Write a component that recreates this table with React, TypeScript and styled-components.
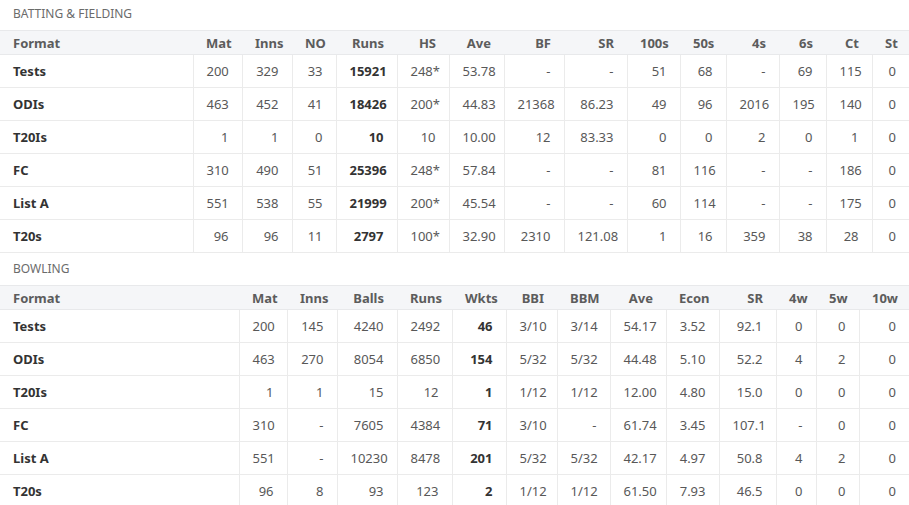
import React from "react";
import styled, { createGlobalStyle } from "styled-components";

const Global = createGlobalStyle`
  html, body { margin: 0; padding: 0; background: #fff; }
  body { font-family: "Noto Sans", "Open Sans", Arial, sans-serif; overflow: hidden; }
`;

const Page = styled.div`
  width: 909px;
  display: flex;
  flex-direction: column;
`;

const Section = styled.section<{ $gap: number }>`
  margin-top: ${(p) => p.$gap}px;
`;

const Title = styled.div`
  padding: 6px 13px 8px;
  font-size: 12px;
  line-height: 16px;
  color: #6b6b6b;
  text-transform: uppercase;
`;

const Table = styled.table`
  width: 909px;
  border-collapse: collapse;
  table-layout: fixed;
  font-size: 13px;
`;

const Th = styled.th<{ $left?: boolean }>`
  height: 23px;
  padding: 0 13px;
  background: #f5f6f8;
  border-top: 1px solid #e8e9eb;
  border-bottom: 1px solid #e8e9eb;
  color: #5c5c5c;
  font-weight: 700;
  text-align: ${(p) => (p.$left ? "left" : "right")};
  white-space: nowrap;
`;

const Td = styled.td<{ $left?: boolean; $bold?: boolean }>`
  height: 32px;
  padding: 0 13px;
  border-bottom: 1px solid #ebebeb;
  border-left: ${(p) => (p.$left ? "none" : "1px solid #ebebeb")};
  color: ${(p) => (p.$bold ? "#333" : "#585858")};
  font-weight: ${(p) => (p.$bold ? 700 : 400)};
  text-align: ${(p) => (p.$left ? "left" : "right")};
  white-space: nowrap;
`;

type Spec = { cols: string[]; widths: number[]; boldCol: number; rows: string[][] };

const batting: Spec = {
  cols: ["Format", "Mat", "Inns", "NO", "Runs", "HS", "Ave", "BF", "SR", "100s", "50s", "4s", "6s", "Ct", "St"],
  widths: [193, 49, 50, 44, 61, 52, 55, 60, 63, 53, 46, 53, 47, 46, 37],
  boldCol: 4,
  rows: [
    ["Tests", "200", "329", "33", "15921", "248*", "53.78", "-", "-", "51", "68", "-", "69", "115", "0"],
    ["ODIs", "463", "452", "41", "18426", "200*", "44.83", "21368", "86.23", "49", "96", "2016", "195", "140", "0"],
    ["T20Is", "1", "1", "0", "10", "10", "10.00", "12", "83.33", "0", "0", "2", "0", "1", "0"],
    ["FC", "310", "490", "51", "25396", "248*", "57.84", "-", "-", "81", "116", "-", "-", "186", "0"],
    ["List A", "551", "538", "55", "21999", "200*", "45.54", "-", "-", "60", "114", "-", "-", "175", "0"],
    ["T20s", "96", "96", "11", "2797", "100*", "32.90", "2310", "121.08", "1", "16", "359", "38", "28", "0"],
  ],
};

const bowling: Spec = {
  cols: ["Format", "Mat", "Inns", "Balls", "Runs", "Wkts", "BBI", "BBM", "Ave", "Econ", "SR", "4w", "5w", "10w"],
  widths: [239, 48, 50, 60, 55, 54, 51, 53, 56, 53, 57, 40, 43, 50],
  boldCol: 5,
  rows: [
    ["Tests", "200", "145", "4240", "2492", "46", "3/10", "3/14", "54.17", "3.52", "92.1", "0", "0", "0"],
    ["ODIs", "463", "270", "8054", "6850", "154", "5/32", "5/32", "44.48", "5.10", "52.2", "4", "2", "0"],
    ["T20Is", "1", "1", "15", "12", "1", "1/12", "1/12", "12.00", "4.80", "15.0", "0", "0", "0"],
    ["FC", "310", "-", "7605", "4384", "71", "3/10", "-", "61.74", "3.45", "107.1", "-", "0", "0"],
    ["List A", "551", "-", "10230", "8478", "201", "5/32", "5/32", "42.17", "4.97", "50.8", "4", "2", "0"],
    ["T20s", "96", "8", "93", "123", "2", "1/12", "1/12", "61.50", "7.93", "46.5", "0", "0", "0"],
  ],
};

function StatsTable({ spec }: { spec: Spec }) {
  return (
    <Table>
      <colgroup>
        {spec.widths.map((w, i) => (
          <col key={i} style={{ width: w }} />
        ))}
      </colgroup>
      <thead>
        <tr>
          {spec.cols.map((c, i) => (
            <Th key={c} $left={i === 0}>
              {c}
            </Th>
          ))}
        </tr>
      </thead>
      <tbody>
        {spec.rows.map((r) => (
          <tr key={r[0]}>
            {r.map((v, i) => (
              <Td key={i} $left={i === 0} $bold={i === 0 || i === spec.boldCol}>
                {v}
              </Td>
            ))}
          </tr>
        ))}
      </tbody>
    </Table>
  );
}

export default function App() {
  return (
    <>
      <Global />
      <Page>
        <Section $gap={0}>
          <Title>Batting &amp; Fielding</Title>
          <StatsTable spec={batting} />
        </Section>
        <Section $gap={2}>
          <Title>Bowling</Title>
          <StatsTable spec={bowling} />
        </Section>
      </Page>
    </>
  );
}
